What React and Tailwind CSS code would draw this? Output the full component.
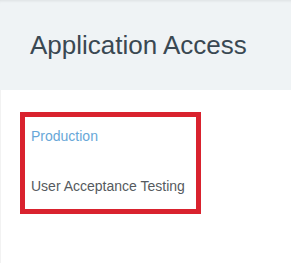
export default function App() {
  return (
    <div className="w-[291px] h-[263px] bg-white overflow-hidden" style={{ fontFamily: '"Liberation Sans", Arial, sans-serif' }}>
      <div className="h-[90px] bg-[#eff3f5] shadow-[inset_0_3px_3px_-2px_rgba(0,0,0,0.08)] flex items-center pl-[30px]">
        <h1 className="text-[26px] leading-none text-[#3a4852]">Application Access</h1>
      </div>
      <div className="h-[173px] border-l border-[#f2f2f2] pt-[22px] pl-[19px]">
        <div className="w-[181px] h-[102px] border-[5px] border-[#d9222e] pl-[6px] pt-[11px]">
          <div className="text-[14px] leading-[16px] text-[#67a7d8]">Production</div>
          <div className="text-[14px] leading-[16px] text-[#555a5e] mt-[34px]">User Acceptance Testing</div>
        </div>
      </div>
    </div>
  );
}
